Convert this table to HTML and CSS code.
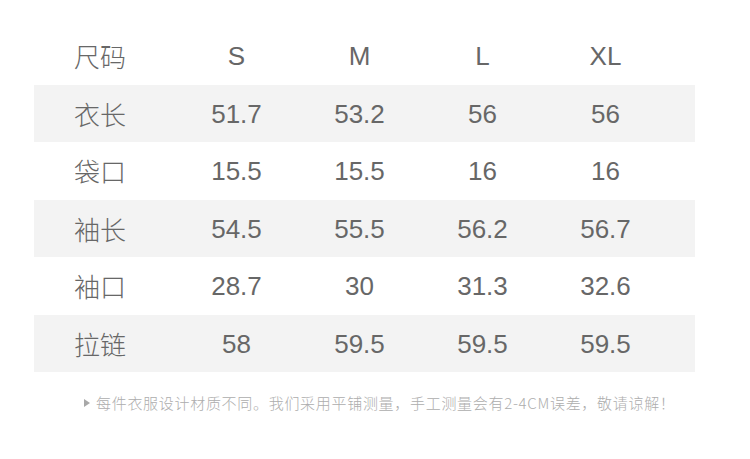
FILE: index.html
```html
<!DOCTYPE html>
<html lang="zh-CN">
<head>
<meta charset="utf-8">
<title>尺码表</title>
<link rel="stylesheet" href="styles.css">
</head>
<body>
<div class="page">
  <div class="size-table">
    <div class="row head">
      <div class="cell label">尺码</div>
      <div class="cell">S</div>
      <div class="cell">M</div>
      <div class="cell">L</div>
      <div class="cell">XL</div>
    </div>
    <div class="row shade">
      <div class="cell label">衣长</div>
      <div class="cell">51.7</div>
      <div class="cell">53.2</div>
      <div class="cell">56</div>
      <div class="cell">56</div>
    </div>
    <div class="row">
      <div class="cell label">袋口</div>
      <div class="cell">15.5</div>
      <div class="cell">15.5</div>
      <div class="cell">16</div>
      <div class="cell">16</div>
    </div>
    <div class="row shade">
      <div class="cell label">袖长</div>
      <div class="cell">54.5</div>
      <div class="cell">55.5</div>
      <div class="cell">56.2</div>
      <div class="cell">56.7</div>
    </div>
    <div class="row">
      <div class="cell label">袖口</div>
      <div class="cell">28.7</div>
      <div class="cell">30</div>
      <div class="cell">31.3</div>
      <div class="cell">32.6</div>
    </div>
    <div class="row shade">
      <div class="cell label">拉链</div>
      <div class="cell">58</div>
      <div class="cell">59.5</div>
      <div class="cell">59.5</div>
      <div class="cell">59.5</div>
    </div>
  </div>
  <p class="note"><span class="tri"></span>每件衣服设计材质不同。我们采用平铺测量，手工测量会有2-4CM误差，敬请谅解！</p>
</div>
</body>
</html>
```

FILE: styles.css
```css
html, body {
  margin: 0;
  padding: 0;
  background: #ffffff;
}

.page {
  width: 750px;
  height: 459px;
  padding-top: 27px;
  box-sizing: border-box;
}

.size-table {
  margin-left: 34px;
  width: 661px;
}

.row {
  display: grid;
  grid-template-columns: 141px repeat(4, 123px) 1fr;
  height: 57.5px;
  align-items: center;
  font-family: "Liberation Sans", "Noto Sans CJK SC", sans-serif;
  font-size: 26px;
  color: #676767;
}

.row.shade {
  background: #f3f3f3;
}

.cell {
  text-align: center;
  line-height: 30px;
  padding-top: 1px;
}

.cell.label {
  text-align: left;
  padding-left: 40px;
  font-family: "Noto Sans CJK SC", sans-serif;
  font-weight: 300;
  font-size: 26px;
}

.note {
  margin: 21px 0 0 84px;
  font-family: "Noto Sans CJK SC", sans-serif;
  font-weight: 300;
  font-size: 15px;
  line-height: 20px;
  letter-spacing: 0.7px;
  color: #adadad;
  display: flex;
  align-items: center;
}

.tri {
  width: 0;
  height: 0;
  border-left: 6px solid #a8a8a8;
  border-top: 4px solid transparent;
  border-bottom: 4px solid transparent;
  margin-right: 6px;
}
```
